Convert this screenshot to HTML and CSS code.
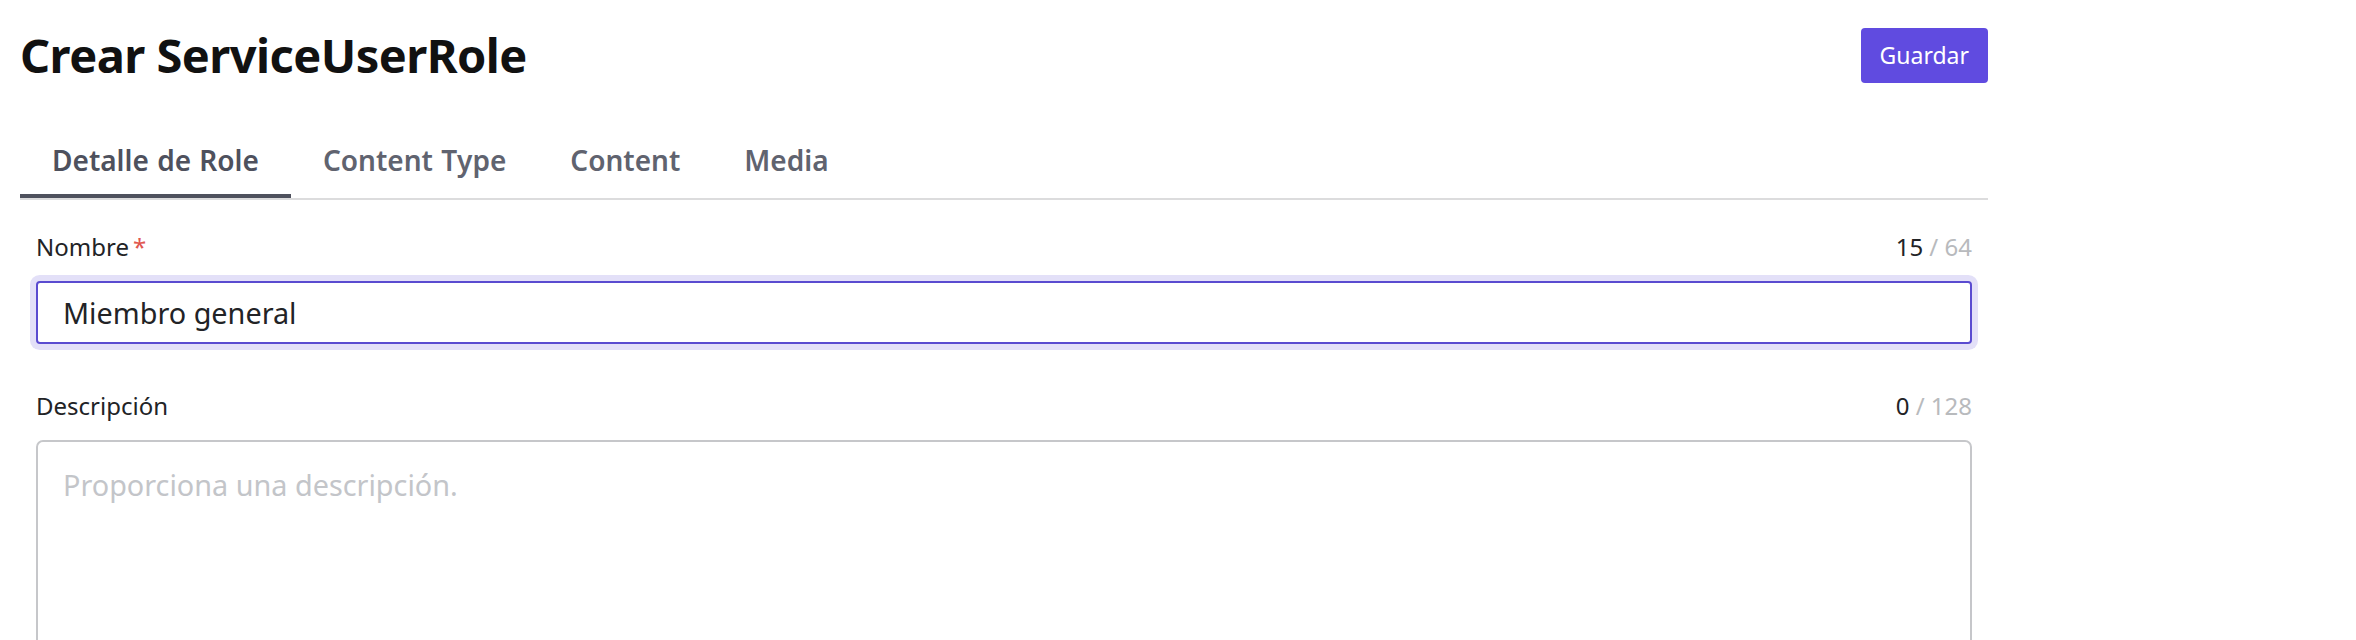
FILE: index.html
```html
<!DOCTYPE html>
<html lang="es">
<head>
<meta charset="utf-8">
<title>Crear ServiceUserRole</title>
<link rel="stylesheet" href="styles.css">
</head>
<body>
<main class="page">
  <header class="page-header">
    <h1 class="page-title">Crear ServiceUserRole</h1>
    <button class="btn-primary" type="button">Guardar</button>
  </header>

  <nav class="tabs">
    <a class="tab tab-active" href="#">Detalle de Role</a>
    <a class="tab" href="#">Content Type</a>
    <a class="tab" href="#">Content</a>
    <a class="tab" href="#">Media</a>
  </nav>

  <form class="form">
    <div class="field">
      <div class="field-head">
        <label class="field-label" for="nombre">Nombre<span class="required">*</span></label>
        <span class="counter"><span class="counter-now">15</span><span class="counter-max"> / 64</span></span>
      </div>
      <input class="text-input is-focused" id="nombre" type="text" value="Miembro general">
    </div>

    <div class="field">
      <div class="field-head">
        <label class="field-label" for="descripcion">Descripción</label>
        <span class="counter"><span class="counter-now">0</span><span class="counter-max"> / 128</span></span>
      </div>
      <textarea class="text-area" id="descripcion" placeholder="Proporciona una descripción."></textarea>
    </div>
  </form>
</main>
</body>
</html>
```

FILE: styles.css
```css
* {
  box-sizing: border-box;
}

html, body {
  margin: 0;
  background: #ffffff;
}

body {
  font-family: "Noto Sans", "Open Sans", "Liberation Sans", sans-serif;
  color: #222326;
}

.page {
  width: 1968px;
  margin-left: 20px;
  padding-top: 28px;
}

/* Header row: title and primary action */
.page-header {
  display: flex;
  align-items: center;
  justify-content: space-between;
  height: 55px;
}

.page-title {
  margin: 0;
  font-size: 47px;
  line-height: 1.2;
  font-weight: 700;
  letter-spacing: -0.55px;
  color: #111111;
}

.btn-primary {
  height: 55px;
  padding: 0 19px;
  border: 0;
  border-radius: 4px;
  background: #604be0;
  color: #ffffff;
  font-family: inherit;
  font-size: 23px;
  line-height: 1;
  cursor: pointer;
}

/* Tabs */
.tabs {
  display: flex;
  margin-top: 42px;
  border-bottom: 2px solid #dcdcdd;
}

.tab {
  display: block;
  padding: 14px 32px 13px;
  border-bottom: 4px solid transparent;
  font-size: 28px;
  line-height: 42px;
  font-weight: 600;
  font-kerning: none;
  font-feature-settings: "kern" 0;
  word-spacing: 1px;
  color: #60636f;
  text-decoration: none;
}

.tab-active {
  color: #4e515d;
  border-bottom-color: #4e515d;
}

/* Form */
.form {
  padding: 30px 16px 0;
}

.field + .field {
  margin-top: 45px;
}

.field-head {
  display: flex;
  justify-content: space-between;
  align-items: baseline;
  font-size: 24px;
  line-height: 34px;
  margin-bottom: 17px;
}

.field-label {
  color: #222326;
}

.required {
  margin-left: 4px;
  color: #e0574f;
}

.counter-now {
  color: #222326;
}

.counter-max {
  color: #b8babd;
}

.text-input {
  display: block;
  width: 100%;
  height: 63px;
  padding: 0 25px;
  border: 2px solid #c6c7ca;
  border-radius: 4px;
  font-family: inherit;
  font-size: 28.8px;
  color: #222326;
  background: #ffffff;
  outline: none;
}

.text-input.is-focused {
  border-color: #5a4bd0;
  box-shadow: 0 0 0 6px #e3e0f8;
}

.text-area {
  display: block;
  width: 100%;
  height: 260px;
  padding: 22px 25px;
  border: 2px solid #c6c7ca;
  border-radius: 7px;
  font-family: inherit;
  font-size: 28.8px;
  line-height: 42px;
  color: #222326;
  background: #ffffff;
  resize: none;
  outline: none;
}

.text-area::placeholder {
  color: #c3c5c9;
}
```
